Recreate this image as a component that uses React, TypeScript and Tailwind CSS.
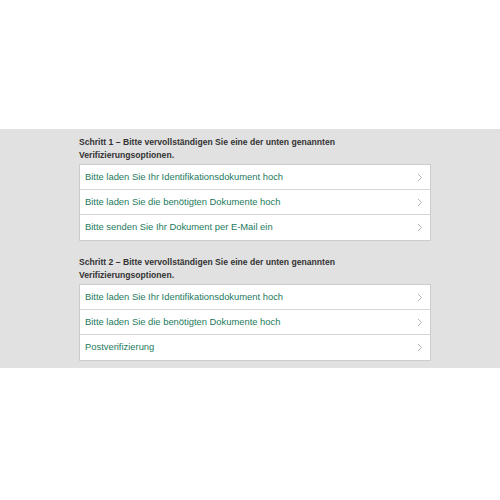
import React from "react";

const Chevron = () => (
  <svg width="6" height="9" viewBox="0 0 6 9" className="shrink-0">
    <path d="M1 1 L4.5 4.5 L1 8" fill="none" stroke="#b5b5b5" strokeWidth="1" />
  </svg>
);

const Row = ({ label }: { label: string }) => (
  <div className="flex h-[25px] items-center justify-between pl-[5px] pr-[7px]">
    <span className="text-[9.4px] text-[#1c7a5c]">{label}</span>
    <Chevron />
  </div>
);

const Section = ({ title, items }: { title: string[]; items: string[] }) => (
  <div>
    <div className="text-[8.6px] font-bold leading-[13px] text-[#333333]">
      {title[0]}
      <br />
      {title[1]}
    </div>
    <div className="mt-[2px] border border-[#cccccc] bg-white divide-y divide-[#d6d6d6]">
      {items.map((it) => (
        <Row key={it} label={it} />
      ))}
    </div>
  </div>
);

export default function App() {
  return (
    <div className="h-[500px] w-[500px] bg-white" style={{ fontFamily: '"Liberation Sans", Arial, sans-serif' }}>
      <div className="h-[129px]" />
      <div className="bg-[#e1e1e1] pt-[7px] pb-[7px]">
        <div className="ml-[79px] w-[352px] flex flex-col gap-[15px]">
          <Section
            title={["Schritt 1 – Bitte vervollständigen Sie eine der unten genannten", "Verifizierungsoptionen."]}
            items={[
              "Bitte laden Sie Ihr Identifikationsdokument hoch",
              "Bitte laden Sie die benötigten Dokumente hoch",
              "Bitte senden Sie Ihr Dokument per E-Mail ein",
            ]}
          />
          <Section
            title={["Schritt 2 – Bitte vervollständigen Sie eine der unten genannten", "Verifizierungsoptionen."]}
            items={[
              "Bitte laden Sie Ihr Identifikationsdokument hoch",
              "Bitte laden Sie die benötigten Dokumente hoch",
              "Postverifizierung",
            ]}
          />
        </div>
      </div>
    </div>
  );
}
